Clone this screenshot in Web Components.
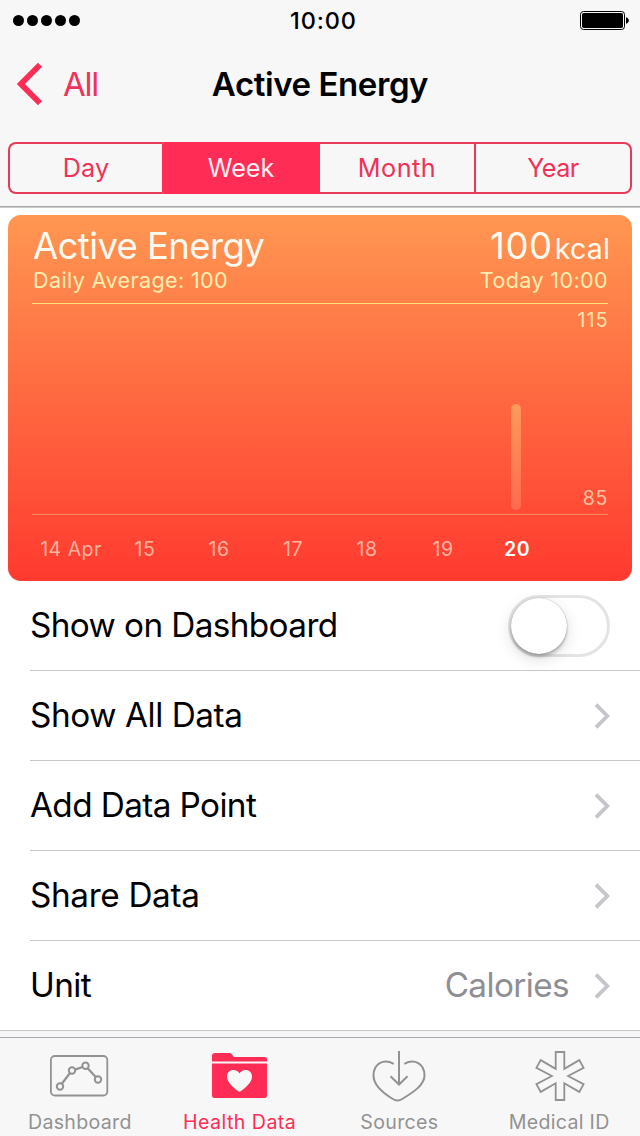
<!DOCTYPE html>
<html lang="en">
<head>
<meta charset="utf-8">
<title>Active Energy</title>
<style>
    :root {
        --tint: #ff2d55;
        --tint-line: #e8395b;
        --tint-text: #f03259;
        --bar-bg: #f7f7f7;
        --hairline: #c8c7cc;
        --muted: #929292;
    }

    body {
        margin: 0;
        background: #fff;
        color: #000;
        font-family: "Inter", "Liberation Sans", sans-serif;
    }
</style>
</head>
<body>
<health-screen></health-screen>

<script>
class StatusBar extends HTMLElement {
    constructor() {
        super();
        this.attachShadow({ mode: 'open' });
    }

    connectedCallback() {
        this.shadowRoot.innerHTML = `
            <style>
                :host {
                    display: grid;
                    grid-template-columns: 1fr auto 1fr;
                    align-items: center;
                    height: 41px;
                    padding: 0 11px 0 13px;
                    font-size: 23.5px;
                    font-weight: 450;
                    letter-spacing: 0.9px;
                }
                svg { display: block; }
                .battery { justify-self: end; }
                .time { margin-left: 8px; margin-right: 3px; }
            </style>
            <svg width="68" height="12" viewBox="0 0 68 12">
                <circle cx="5.5" cy="5.5" r="5.5"/>
                <circle cx="19.5" cy="5.5" r="5.5"/>
                <circle cx="33.5" cy="5.5" r="5.5"/>
                <circle cx="47.5" cy="5.5" r="5.5"/>
                <circle cx="61.5" cy="5.5" r="5.5"/>
            </svg>
            <span class="time"><slot></slot></span>
            <svg class="battery" width="49" height="19" viewBox="0 0 49 19">
                <rect x="0.5" y="0.5" width="44" height="18" rx="3" fill="none" stroke="#000"/>
                <rect x="2" y="2" width="41" height="15" rx="1.8"/>
                <path d="M46 6.2c1.8.4 2.8 1.8 2.8 3.3s-1 2.9-2.8 3.3z"/>
            </svg>
        `;
    }
}
customElements.define('status-bar', StatusBar);

class NavBar extends HTMLElement {
    constructor() {
        super();
        this.attachShadow({ mode: 'open' });
    }

    connectedCallback() {
        this.shadowRoot.innerHTML = `
            <style>
                :host {
                    display: grid;
                    grid-template-columns: 1fr auto 1fr;
                    align-items: center;
                    height: 86px;
                    font-size: 33px;
                }
                .back {
                    display: flex;
                    align-items: center;
                    gap: 19px;
                    padding-left: 16px;
                    color: var(--tint-text);
                    letter-spacing: -1.2px;
                }
                h1 {
                    margin: 0;
                    font-size: 33px;
                    font-weight: 600;
                    letter-spacing: -0.42px;
                }
            </style>
            <div class="back">
                <svg width="28" height="44" viewBox="0 0 28 44">
                    <path d="M24 2.8L4.9 22 24 41.200" fill="none" stroke="var(--tint)" stroke-width="5.800"/>
                </svg>
                <span>${this.getAttribute('back')}</span>
            </div>
            <h1><slot></slot></h1>
        `;
    }
}
customElements.define('nav-bar', NavBar);

class SegmentItem extends HTMLElement {
    constructor() {
        super();
        this.attachShadow({ mode: 'open' });
    }

    connectedCallback() {
        this.shadowRoot.innerHTML = `
            <style>
                :host {
                    box-sizing: border-box;
                    width: 25%;
                    display: flex;
                    align-items: center;
                    justify-content: center;
                    border: solid var(--tint-line);
                    border-width: 2px 2px 2px 0;
                    padding-bottom: 1px;
                    color: var(--tint-text);
                    font-size: 25.2px;
                }
                :host(:first-child) {
                    border-radius: 8px 0 0 8px;
                    border-left-width: 2px;
                    border-right-color: var(--tint);
                }
                :host(:last-child) { border-radius: 0 8px 8px 0; }
                :host([selected]) {
                    background: var(--tint);
                    border-color: var(--tint);
                    color: #ffeef2;
                }
            </style>
            <slot></slot>
        `;
    }
}
customElements.define('segment-item', SegmentItem);

class SegmentedControl extends HTMLElement {
    constructor() {
        super();
        this.attachShadow({ mode: 'open' });
    }

    connectedCallback() {
        this.shadowRoot.innerHTML = `
            <style>
                :host {
                    display: flex;
                    height: 52px;
                    margin: 15px 8px 12px;
                }
            </style>
            <slot></slot>
        `;
    }
}
customElements.define('segmented-control', SegmentedControl);

class EnergyCard extends HTMLElement {
    constructor() {
        super();
        this.attachShadow({ mode: 'open' });
    }

    connectedCallback() {
        const days = this.getAttribute('days').split(',');
        const labels = days.map((day, i) =>
            `<span class="${i === days.length - 1 ? 'today' : ''}">${day}</span>`
        ).join('');

        this.shadowRoot.innerHTML = `
            <style>
                :host {
                    display: flex;
                    flex-direction: column;
                    box-sizing: border-box;
                    height: 366px;
                    margin: 7px 8px 0;
                    padding: 10px 24px 0;
                    border-radius: 13px;
                    background: linear-gradient(#ff9752, #ff3a2f);
                    color: #fffaf0;
                }
                .line {
                    display: flex;
                    justify-content: space-between;
                    align-items: baseline;
                    white-space: nowrap;
                }
                .head {
                    height: 42px;
                    line-height: 42px;
                    font-size: 36.5px;
                }
                .title { letter-spacing: -0.6px; margin-left: 1px; }
                .unit { font-size: 28.5px; margin: 0 -2px 0 2px; letter-spacing: 0.2px; }
                .value { letter-spacing: 0.6px; }
                .sub {
                    height: 27px;
                    line-height: 27px;
                    font-size: 21.5px;
                    letter-spacing: 0.4px;
                    color: #ffeeb0;
                }
                .average { margin-left: 1px; }
                .chart {
                    display: grid;
                    grid-template-columns: 1fr auto;
                    box-sizing: border-box;
                    height: 212px;
                    margin-top: 9px;
                    border-top: 1px solid #ffe07c;
                    border-bottom: 1px solid #ff8a68;
                }
                .bar {
                    justify-self: end;
                    align-self: end;
                    width: 10px;
                    height: 106px;
                    margin: 0 55px 4px 0;
                    border-radius: 5px;
                    background: linear-gradient(#ff9a5a, #ff694f);
                }
                .scale {
                    display: flex;
                    flex-direction: column;
                    justify-content: space-between;
                    align-items: flex-end;
                    width: 32px;
                    padding: 4px 0;
                    line-height: 24px;
                    font-size: 19.5px;
                    letter-spacing: 0.7px;
                    color: #ffe4ac;
                }
                .scale span:first-child { letter-spacing: 1.3px; margin-right: -1px; }
                .scale span:last-child { color: #ffc0a0; }
                .days {
                    display: grid;
                    grid-template-columns: repeat(5, 74px) 78px 70px;
                    margin: 22px 0 0 2px;
                    line-height: 24px;
                    font-size: 19.5px;
                    letter-spacing: 0.5px;
                    text-align: center;
                    color: #ffb3a1;
                }
                .today { font-weight: 600; color: #fff; }
            </style>
            <div class="line head">
                <span class="title"><slot></slot></span>
                <span><span class="value">${this.getAttribute('value')}</span><span class="unit">${this.getAttribute('unit')}</span></span>
            </div>
            <div class="line sub">
                <span class="average">Daily Average: ${this.getAttribute('average')}</span>
                <span>${this.getAttribute('when')}</span>
            </div>
            <div class="chart">
                <div class="bar"></div>
                <div class="scale">
                    <span>${this.getAttribute('max')}</span>
                    <span>${this.getAttribute('min')}</span>
                </div>
            </div>
            <div class="days">${labels}</div>
        `;
    }
}
customElements.define('energy-card', EnergyCard);

class ToggleSwitch extends HTMLElement {
    constructor() {
        super();
        this.attachShadow({ mode: 'open' });
    }

    connectedCallback() {
        this.shadowRoot.innerHTML = `
            <style>
                :host {
                    display: block;
                    box-sizing: border-box;
                    width: 102px;
                    height: 62px;
                    border: 3px solid #e4e4e4;
                    border-radius: 31px;
                    background: #fff;
                }
                .thumb {
                    width: 56px;
                    height: 56px;
                    border-radius: 50%;
                    background: #fff;
                    box-shadow: 0 0 1px rgba(0, 0, 0, .4), 0 3px 3px rgba(0, 0, 0, .22), 0 5px 16px rgba(0, 0, 0, .14);
                }
            </style>
            <div class="thumb"></div>
        `;
    }
}
customElements.define('toggle-switch', ToggleSwitch);

class ListRow extends HTMLElement {
    constructor() {
        super();
        this.attachShadow({ mode: 'open' });
    }

    connectedCallback() {
        const chevron = `
            <svg width="17" height="28" viewBox="0 0 17 28">
                <path d="M2 2.600L13.300 14 2 25.400" fill="none" stroke="#c6c6ca" stroke-width="3.800"/>
            </svg>`;

        this.shadowRoot.innerHTML = `
            <style>
                :host {
                    display: flex;
                    align-items: center;
                    box-sizing: border-box;
                    height: 90px;
                    margin-left: 30px;
                    padding-right: 30px;
                    border-bottom: 1px solid var(--hairline);
                    font-size: 33.3px;
                    letter-spacing: var(--track, -0.6px);
                }
                :host(:last-of-type) { margin-left: 0; padding-left: 30px; }
                .label, .detail { padding-bottom: 1px; }
                .label { flex: 1; }
                .detail { color: #8e8e93; margin-right: 25px; }
                svg { display: block; margin-right: -1px; margin-top: 1px; }
                ::slotted(toggle-switch) { margin-top: 1px; }
            </style>
            <span class="label">${this.getAttribute('label')}</span>
            <span class="detail">${this.getAttribute('detail') || ''}</span>
            <slot>${chevron}</slot>
        `;
    }
}
customElements.define('list-row', ListRow);

const tabIcons = {
    dashboard: `
        <g fill="none" stroke="currentColor">
            <rect x="0.9" y="5" width="56.4" height="39.5" rx="4" stroke-width="1.8"/>
            <path d="M12 32.500l8-10.500M25 18.600l7.500-2.600M37.700 17.200l8 8.800" stroke-width="2.200"/>
            <g stroke-width="2">
                <circle cx="10" cy="35.500" r="3.200"/>
                <circle cx="22" cy="19.500" r="3.200"/>
                <circle cx="35.500" cy="14.800" r="3.200"/>
                <circle cx="48" cy="28.500" r="3.200"/>
            </g>
        </g>`,
    health: `
        <g transform="translate(2 0)" fill="currentColor">
            <path d="M0 10.500V5a3 3 0 0 1 3-3h14.500c3 0 3 4 5.500 4h29.500a2.500 2.500 0 0 1 2.500 2.500v2z"/>
            <path d="M0 12.500h55V44.500a2.500 2.500 0 0 1-2.500 2.500H2.500A2.500 2.500 0 0 1 0 44.500z"/>
            <path d="M27.500 41C23 37.800 15 32 15 25.500c0-4 3-6.500 6.300-6.500 2.700 0 5 1.300 6.200 3.500 1.200-2.200 3.500-3.500 6.200-3.500 3.300 0 6.300 2.500 6.300 6.500 0 6.500-8 12.300-12.500 15.500z" fill="var(--bar-bg)"/>
        </g>`,
    sources: `
        <g transform="translate(-0.5 0)" fill="none" stroke="currentColor" stroke-width="2">
            <path d="M24.200 12.800C14 7.500 4 12.500 4 24.500 4 34 12 41 22.500 47.500c4.500 2.700 6.500 2.700 11 0C44 41 55 34 55 24.500 55 12.500 45 7.500 34.800 12.800"/>
            <path d="M29.500 0v33.500M21 25.300l8.500 8.200 8.500-8.200"/>
        </g>`,
    medical: `
        <path transform="translate(0.5 0)" d="M25.200 1h8.600v16.900l15-8.800 4.300 7.700L37.600 25l15.500 8.200-4.300 7.700-15-8.700V49h-8.600V32.200l-15 8.700-4.300-7.700L21.400 25 5.900 16.800l4.300-7.700 15 8.800z" fill="none" stroke="currentColor" stroke-width="1.800"/>`
};

class TabItem extends HTMLElement {
    constructor() {
        super();
        this.attachShadow({ mode: 'open' });
    }

    connectedCallback() {
        this.shadowRoot.innerHTML = `
            <style>
                :host {
                    flex: 1 1 0;
                    display: flex;
                    flex-direction: column;
                    align-items: center;
                    color: var(--muted);
                    font-size: 19.6px;
                    line-height: 24px;
                    letter-spacing: 0.3px;
                    white-space: nowrap;
                }
                :host([selected]) { color: var(--tint); letter-spacing: 0.45px; }
                svg { display: block; margin-bottom: 8px; }
            </style>
            <svg width="59" height="51" viewBox="0 0 59 51">${tabIcons[this.getAttribute('icon')]}</svg>
            <slot></slot>
        `;
    }
}
customElements.define('tab-item', TabItem);

class TabBar extends HTMLElement {
    constructor() {
        super();
        this.attachShadow({ mode: 'open' });
    }

    connectedCallback() {
        this.shadowRoot.innerHTML = `
            <style>
                :host {
                    display: flex;
                    box-sizing: border-box;
                    height: 99px;
                    padding: 13px 1px 0 0;
                    border-top: 1px solid #a9a9a9;
                    background: var(--bar-bg);
                }
            </style>
            <slot></slot>
        `;
    }
}
customElements.define('tab-bar', TabBar);

class HealthScreen extends HTMLElement {
    constructor() {
        super();
        this.attachShadow({ mode: 'open' });
    }

    connectedCallback() {
        this.shadowRoot.innerHTML = `
            <style>
                :host {
                    display: flex;
                    flex-direction: column;
                    width: 640px;
                    height: 1136px;
                    overflow: hidden;
                }
                header {
                    display: flow-root;
                    background: var(--bar-bg);
                    border-bottom: 1px solid #a8aaaa;
                    box-shadow: 0 1px #c9cbcb;
                    margin-bottom: 1px;
                }
                main { flex: 1; background: #f7f7fa; }
                .sheet { display: flow-root; background: #fff; }
            </style>
            <header>
                <status-bar>10:00</status-bar>
                <nav-bar back="All">Active Energy</nav-bar>
                <segmented-control>
                    <segment-item style="letter-spacing: 0.2px">Day</segment-item>
                    <segment-item selected>Week</segment-item>
                    <segment-item style="letter-spacing: 0.5px">Month</segment-item>
                    <segment-item style="letter-spacing: -0.5px">Year</segment-item>
                </segmented-control>
            </header>
            <main>
                <div class="sheet">
                    <energy-card value="100" unit="kcal" average="100" when="Today 10:00"
                        max="115" min="85" days="14 Apr,15,16,17,18,19,20">Active Energy</energy-card>
                    <list-row label="Show on Dashboard"><toggle-switch></toggle-switch></list-row>
                    <list-row label="Show All Data" style="--track: -0.42px"></list-row>
                    <list-row label="Add Data Point"></list-row>
                    <list-row label="Share Data" style="--track: -0.35px"></list-row>
                    <list-row label="Unit" detail="Calories"></list-row>
                </div>
            </main>
            <tab-bar>
                <tab-item icon="dashboard">Dashboard</tab-item>
                <tab-item icon="health" selected>Health Data</tab-item>
                <tab-item icon="sources">Sources</tab-item>
                <tab-item icon="medical">Medical ID</tab-item>
            </tab-bar>
        `;
    }
}
customElements.define('health-screen', HealthScreen);
</script>
</body>
</html>
